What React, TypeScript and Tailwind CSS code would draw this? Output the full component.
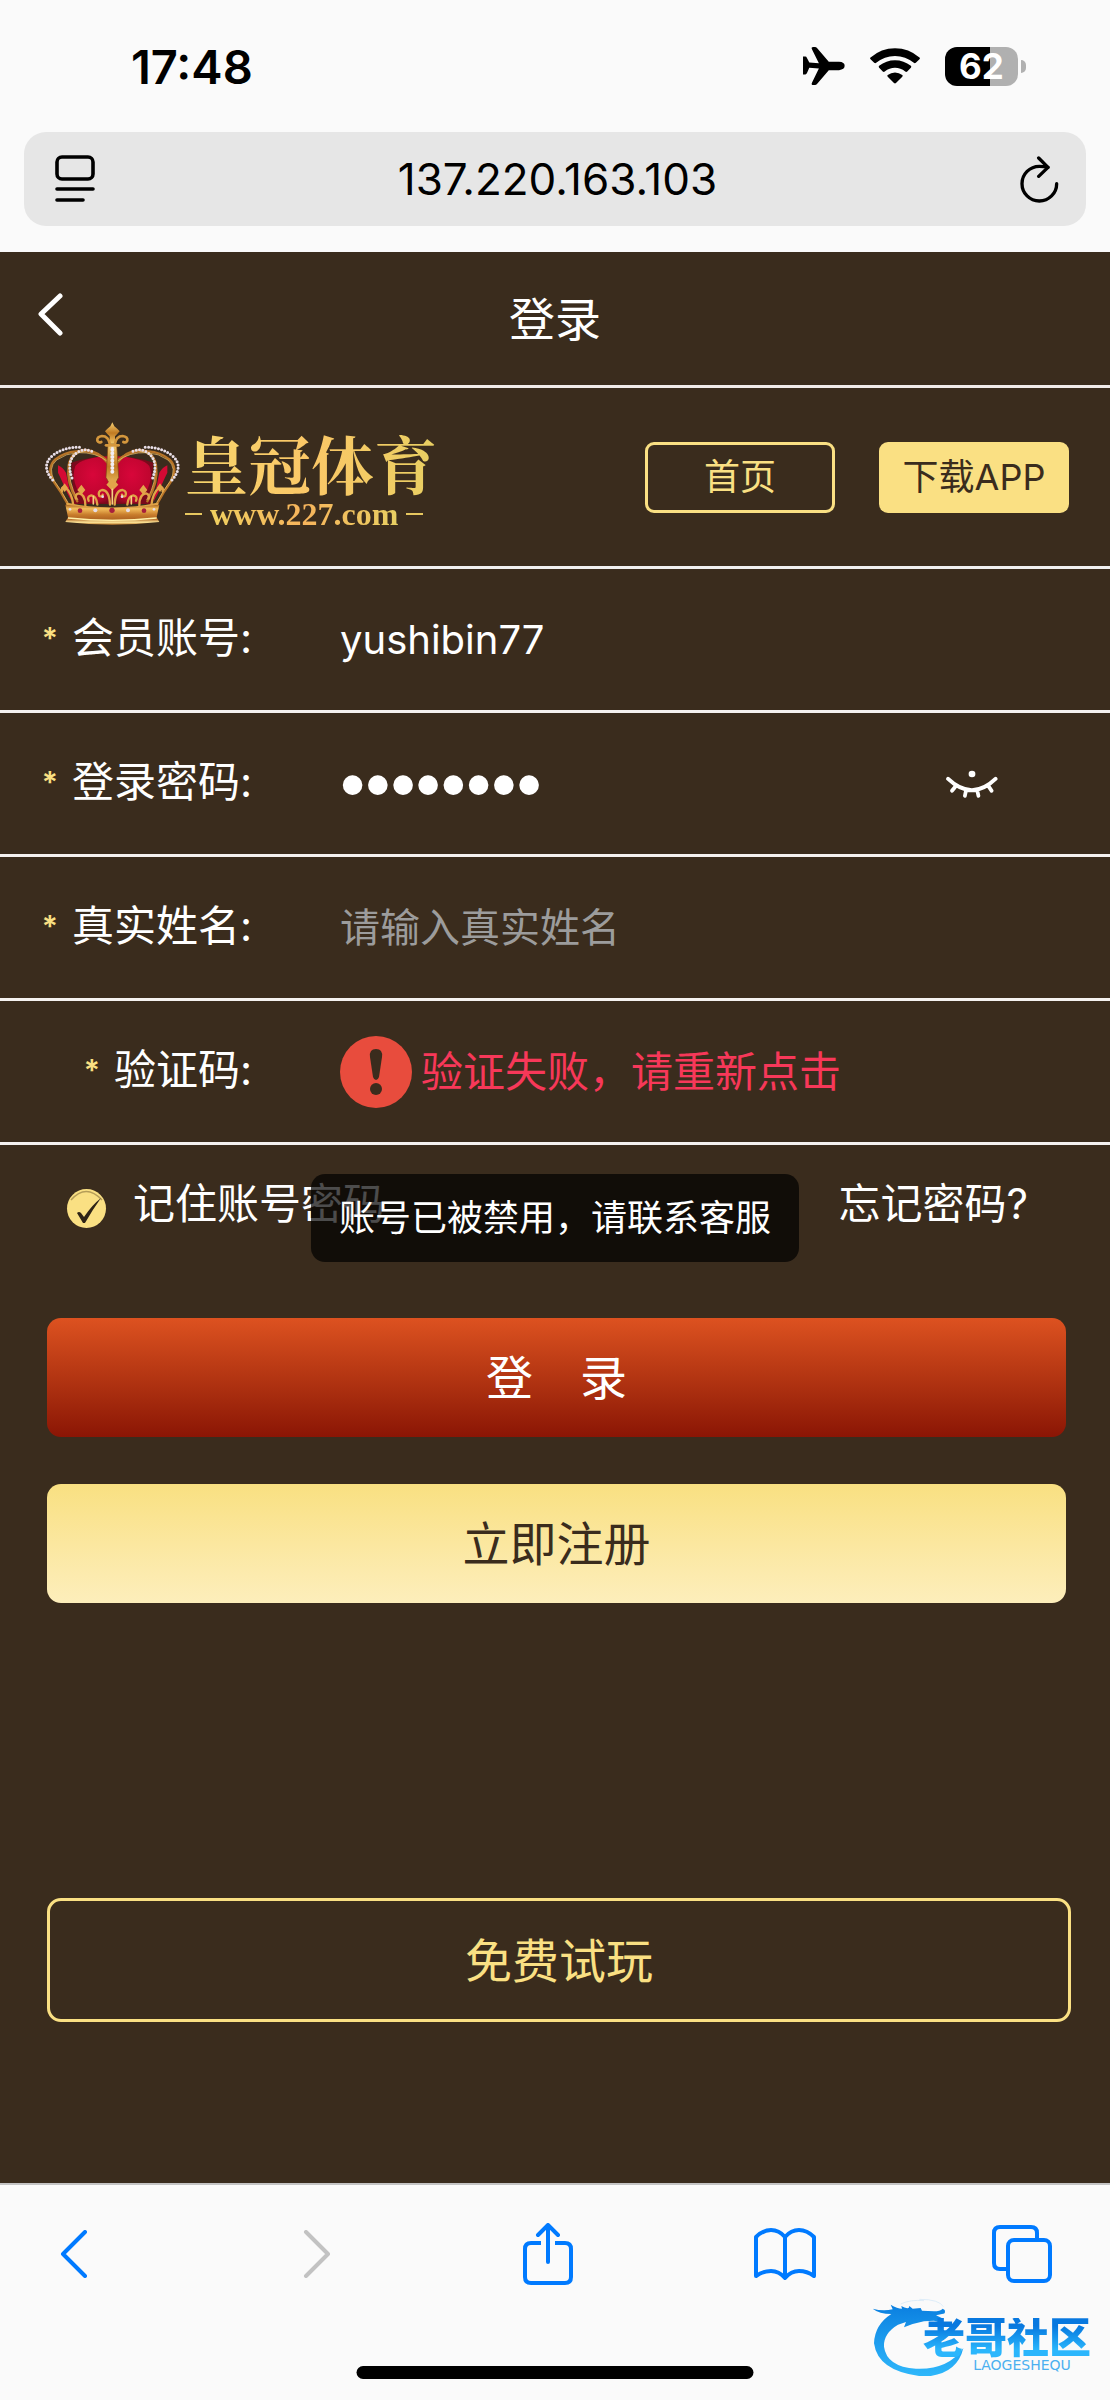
import { useState, type ReactNode } from 'react';

function StatusBar() {
  return (
    <div className="flex h-[132px] items-center justify-between pl-[131px] pr-[84px]">
      <span className="text-[47px] font-semibold leading-none text-black">17:48</span>
      <div className="flex items-center gap-[25px]">
        <svg className="h-[38px] w-[42px]" viewBox="72 53 127 115" aria-hidden="true">
          <path
            d="M72 82h7q3 0 5 4l7 14 29 2-21-42q-3-7 4-7h5q4 0 7 4l35 41h31q17 1 17 12t-17 13h-31l-35 41q-3 4-7 4h-5q-7 0-4-7l21-43-29-2-7 16q-2 4-5 4h-7Z"
            fill="#000"
          />
        </svg>
        <svg className="h-[36px] w-[50px]" viewBox="273 50 150 109" aria-hidden="true">
          <path d="M274 84q-3-3 0-5 32-28 74-28t74 28q3 2 0 5l-11 11q-3 3-6 0-25-21-57-21t-57 21q-3 3-6 0Z" />
          <path d="M300 110q-3-3 0-6 21-17 48-17t48 17q3 3 0 6l-11 11q-3 3-6 0-14-11-31-11t-31 11q-3 3-6 0Z" />
          <path d="M326 137q-3-3 0-5 10-8 22-8t22 8q3 2 0 5l-19 19q-3 3-6 0Z" />
        </svg>
        <div className="flex items-center gap-[3px]">
          <div className="flex h-[39px] w-[73px] items-center justify-center rounded-[12px] bg-linear-to-r from-black from-62% to-[#b0b0b0] to-62% text-[35px] font-bold leading-none text-white">
            62
          </div>
          <div className="h-[13px] w-[5px] rounded-r-full bg-[#b0b0b0]" />
        </div>
      </div>
    </div>
  );
}

function AddressBar() {
  return (
    <div className="mx-6 flex h-[94px] items-center justify-between rounded-[22px] bg-[#e6e6e6] pl-[31px] pr-[26px]">
      <button type="button" aria-label="页面菜单">
        <svg className="h-[48px] w-[40px]" viewBox="0 0 40 48" fill="none" stroke="#000" strokeWidth="3.6" strokeLinecap="round">
          <rect x="2" y="2" width="36" height="22" rx="5" />
          <path d="M2 34h36M2 45h26" />
        </svg>
      </button>
      <span className="text-[44px] leading-none text-black">137.220.163.103</span>
      <button type="button" aria-label="刷新">
        <svg className="h-[47px] w-[40px]" viewBox="722 371 118 141" fill="none" stroke="#000" strokeWidth="10" strokeLinecap="round" strokeLinejoin="round">
          <path d="M831 454a52 52 0 1 1-52-52q14 0 26 3" />
          <path d="M777 377l28 28-28 27" />
        </svg>
      </button>
    </div>
  );
}

function Crown() {
  return (
    <svg className="h-[104px] w-[137px]" viewBox="42 38 411 312" fill="none" aria-hidden="true">
      <defs>
        <linearGradient id="gold" x1="0" y1="0" x2="0" y2="1">
          <stop offset="0" stopColor="#f6cf72" />
          <stop offset="0.5" stopColor="#c07a22" />
          <stop offset="1" stopColor="#f3c768" />
        </linearGradient>
        <linearGradient id="band" x1="0" y1="0" x2="0" y2="1">
          <stop offset="0" stopColor="#a8601c" />
          <stop offset="0.2" stopColor="#f3bd5c" />
          <stop offset="0.5" stopColor="#c87d2c" />
          <stop offset="0.72" stopColor="#b06422" />
          <stop offset="0.88" stopColor="#fde79a" />
          <stop offset="1" stopColor="#c07a2a" />
        </linearGradient>
        <radialGradient id="velvet" cx="0.5" cy="0.4" r="0.7">
          <stop offset="0" stopColor="#d8063a" />
          <stop offset="0.75" stopColor="#bd052e" />
          <stop offset="1" stopColor="#7a0a1c" />
        </radialGradient>
      </defs>
      <path d="M84 168q14 6 24 22l18 88-14-26Q96 214 84 190Z" fill="#d40a34" />
      <path d="M412 168q-14 6-24 22l-18 88 14-26q16-38 28-62Z" fill="#d40a34" />
      <path d="M124 160q60-20 123-20 63 0 123 20l-8 124H132Z" fill="#7a0a1c" />
      <path d="M136 170q20-26 110-30v140h-78q-50-60-32-110Z" fill="url(#velvet)" />
      <path d="M358 170q-20-26-110-30v140h78q50-60 32-110Z" fill="url(#velvet)" />
      <g stroke="#b87427" strokeWidth="7" strokeLinecap="round">
        <path d="M112 282Q92 245 72 218 48 176 76 150q28-22 62-24 60-4 96 30" />
        <path d="M382 282q20-37 40-64 24-42-4-68-28-22-62-24-60-4-96 30" />
        <path d="M142 276q-34-58-26-108 8-42 48-46 40 2 70 40" />
        <path d="M352 276q34-58 26-108-8-42-48-46-40 2-70 40" />
      </g>
      <g stroke="#f2c871" strokeWidth="2">
        <path d="M114 280Q94 243 74 216 52 176 80 152q28-20 62-22 56-2 90 26" />
        <path d="M380 280q20-37 40-64 22-40-6-64-28-20-62-22-56-2-90 26" />
        <path d="M144 272q-32-56-24-106 8-36 44-40" />
        <path d="M350 272q32-56 24-106-8-36-44-40" />
      </g>
      <g stroke="#e9dfe8" strokeWidth="9" strokeLinecap="round" strokeDasharray="0 10">
        <path d="M68 212q-36-42-2-72 34-28 84-26" />
        <path d="M426 212q36-42 2-72-34-28-84-26" />
        <path d="M126 206q-20-54 18-78 20-12 42-2" />
        <path d="M368 206q20-54-18-78-20-12-42-2" />
      </g>
      <path d="M234 104h26l6 100-19 36-19-36Z" fill="url(#gold)" stroke="#7c4512" strokeWidth="2" />
      <path d="M247 110v86" stroke="#f2edf4" strokeWidth="12" strokeLinecap="round" strokeDasharray="0 11" />
      <path d="M247 39l6 12q10 8 16 15-8 9-14 15v22h-16V81q-8-7-14-15 6-7 16-15Z" fill="url(#gold)" />
      <g stroke="#d4973d" strokeWidth="8" strokeLinecap="round">
        <path d="M240 106q-4-26-24-26-16 2-14 14 4 8 12 4" />
        <path d="M254 106q4-26 24-26 16 2 14 14-4 8-12 4" />
        <path d="M228 108h38" />
      </g>
      {/* scroll work above the band */}
      <g stroke="#e0a347" strokeWidth="7" strokeLinecap="round">
        <path d="M240 286q-2-44-24-44-14 4-8 18 8 4 10-4M254 286q2-44 24-44 14 4 8 18-8 4-10-4" />
        <path d="M202 286q-2-26-18-28-14 4-8 16M292 286q2-26 18-28 14 4 8 16" />
        <path d="M166 288q0-34-20-36-12 4-8 16M328 288q0-34 20-36 12 4 8 16" />
        <path d="M130 288q-4-38-24-54-14-2-10 12M364 288q4-38 24-54 14-2 10 12" />
        <path d="M112 284q60 14 135 14t135-14" />
      </g>
      <path d="M247 206l18 20-18 18-18-18ZM154 226l12 16-12 14-12-14ZM340 226l12 16-12 14-12-14ZM104 222l10 14-10 12-10-12ZM390 222l10 14-10 12-10-12Z" fill="#e2a54a" />
      <path d="M247 240v44M190 262v22M304 262v22" stroke="#f5d283" strokeWidth="5" strokeLinecap="round" />
      <path d="M106 286q141 20 282 0l-8 38 8 14q-141 16-282 0l8-14Z" fill="url(#band)" />
      <path d="M114 326q133 14 266 0" stroke="#fff0a8" strokeWidth="4" />
      <g fill="#a8203c">
        <circle cx="150" cy="304" r="7" />
        <circle cx="246" cy="303" r="8" />
        <circle cx="342" cy="304" r="7" />
      </g>
      <g fill="#e6dce6">
        <circle cx="196" cy="303" r="6" />
        <circle cx="294" cy="303" r="6" />
        <circle cx="120" cy="300" r="4" />
        <circle cx="372" cy="300" r="4" />
        <circle cx="218" cy="262" r="4" />
        <circle cx="276" cy="262" r="4" />
      </g>
    </svg>
  );
}

function Logo() {
  return (
    <a href="#" className="flex items-center gap-1 pb-1.5" aria-label="皇冠体育 www.227.com">
      <Crown />
      <span className="flex flex-col">
        <span className="bg-linear-to-r from-[#f6d56c] via-[#fbc767] to-[#e8cf62] bg-clip-text font-['Noto_Serif_CJK_SC','Noto_Sans_CJK_SC',serif] text-[63px] font-bold leading-[80px] text-transparent">
          皇冠体育
        </span>
        <span className="flex items-center gap-2 font-['Liberation_Serif',serif] text-[32px] font-bold leading-[24px]">
          <span className="h-[2px] w-[17px] bg-[#e6c75f]" />
          <span className="bg-linear-to-r from-[#f0d060] via-[#f6b45c] to-[#e8cf62] bg-clip-text text-transparent">www.227.com</span>
          <span className="h-[2px] w-[17px] bg-[#e6c75f]" />
        </span>
      </span>
    </a>
  );
}

function Row({ label, htmlFor, children }: { label: string; htmlFor: string; children: ReactNode }) {
  return (
    <div className="flex h-[144px] items-center border-b-[3px] border-[#f5f2f0]">
      <label htmlFor={htmlFor} className="flex w-[252px] shrink-0 items-center justify-end gap-[14px] pb-1 text-[42px] leading-[60px] text-white">
        <span className="text-[30px] font-semibold text-[#fae083]">*</span>
        {label}:
      </label>
      <div className="ml-[88px] flex min-w-0 flex-1 items-center">{children}</div>
    </div>
  );
}

function Watermark() {
  return (
    <div className="absolute right-4 bottom-6 h-[78px] w-[222px]">
      <svg className="h-full w-full" viewBox="94 54 666 234" aria-hidden="true">
        <defs>
          <linearGradient id="wave" x1="0" y1="0" x2="0" y2="1">
            <stop offset="0" stopColor="#0a7fe0" />
            <stop offset="1" stopColor="#2fb8fb" />
          </linearGradient>
        </defs>
        <path
          d="M96 86q30 8 60 2l-6-14q20 12 34 12l-2-8q12 8 22 6l2-6 10 8 24-2 4 8 36 2q18 0 26-8l6 4q4 12-8 12l-18 4 22 10-6 12-22-6-30 2-34 8-26 10 6-16-24 8q-44 26-42 66 8 60 96 66 96 4 142-62-18 78-114 86Q112 278 100 190q2-56 52-88-36 0-56-16Z"
          fill="url(#wave)"
        />
        <path d="M180 72q30-14 70-10M236 58q60 0 72 22" fill="none" stroke="#cfe6f7" strokeWidth="2" />
      </svg>
      <span className="absolute top-[20px] right-[3px] flex flex-col items-center text-right">
        <span className="flex gap-[3px] bg-linear-to-b from-[#0878df] from-20% to-[#2bb6fc] to-80% bg-clip-text text-[42px] font-black leading-[40px] text-transparent">
          老哥社区
        </span>
        <span className="pl-[30px] font-['DejaVu_Sans',sans-serif] text-[14px] leading-[14px] text-[#4bb0f0]">LAOGESHEQU</span>
      </span>
    </div>
  );
}

function BrowserToolbar() {
  return (
    <footer className="relative h-[217px] border-t-2 border-[#c4c4c4] bg-[#fafafa]">
      <nav className="flex items-center justify-between pl-[42px] pr-[56px] pt-[37px] text-[#007aff]">
        <button type="button" aria-label="后退" className="flex h-[64px] w-[64px] items-center justify-center">
          <svg className="h-[48px] w-[28px]" viewBox="0 0 28 48" fill="none" stroke="currentColor" strokeWidth="4" strokeLinecap="round" strokeLinejoin="round">
            <path d="M25 2 3 24l22 22" />
          </svg>
        </button>
        <button type="button" aria-label="前进" className="flex h-[64px] w-[64px] items-center justify-end pr-3 text-[#c2c2c2]">
          <svg className="h-[48px] w-[28px]" viewBox="0 0 28 48" fill="none" stroke="currentColor" strokeWidth="4" strokeLinecap="round" strokeLinejoin="round">
            <path d="m3 2 22 22L3 46" />
          </svg>
        </button>
        <button type="button" aria-label="分享" className="flex h-[64px] w-[64px] items-center justify-center">
          <svg className="h-[62px] w-[50px]" viewBox="0 0 50 62" fill="none" stroke="currentColor" strokeWidth="4" strokeLinecap="round" strokeLinejoin="round">
            <path d="M18 20H8q-6 0-6 6v28q0 6 6 6h34q6 0 6-6V26q0-6-6-6H32" strokeLinecap="butt" />
            <path d="M25 39V3M15 12 25 2l10 10" />
          </svg>
        </button>
        <button type="button" aria-label="书签" className="flex h-[64px] w-[64px] items-center justify-center">
          <svg className="h-[52px] w-[62px]" viewBox="0 0 62 52" fill="none" stroke="currentColor" strokeWidth="4" strokeLinecap="round" strokeLinejoin="round">
            <path d="M31 9Q25 2 17 2T2 9v39q7-5 15-5t14 7q6-7 14-7t15 5V9q-7-7-15-7T31 9v40" />
          </svg>
        </button>
        <button type="button" aria-label="标签页" className="flex h-[64px] w-[64px] items-center justify-center">
          <svg className="h-[58px] w-[60px]" viewBox="0 0 60 58" fill="none" stroke="currentColor" strokeWidth="4" strokeLinejoin="round">
            <path d="M15 44H8q-6 0-6-6V8q0-6 6-6h31q6 0 6 6v6" />
            <rect x="16" y="15" width="42" height="41" rx="6" />
          </svg>
        </button>
      </nav>
      <div className="absolute bottom-[21px] left-1/2 h-[13px] w-[397px] -translate-x-1/2 rounded-full bg-black" />
      <Watermark />
    </footer>
  );
}

export default function App() {
  const [account, setAccount] = useState('yushibin77');
  const [password, setPassword] = useState('12345678');
  const [realName, setRealName] = useState('');
  const [remember, setRemember] = useState(true);

  return (
    <div className="flex min-h-screen flex-col bg-[#fafafa] font-['Inter','Noto_Sans_CJK_SC',sans-serif]">
      <div className="h-[252px]">
        <StatusBar />
        <AddressBar />
      </div>

      <main className="flex-1 bg-[#3a2c1d]">
        <header className="relative flex h-[136px] items-center justify-center border-b-[3px] border-[#f0ebe9]">
          <button type="button" aria-label="返回" className="absolute left-[38px] top-[41px]">
            <svg className="h-[43px] w-[25px]" viewBox="0 0 25 43" fill="none" stroke="#fff" strokeWidth="5" strokeLinecap="round" strokeLinejoin="round">
              <path d="M22 3 3 21l19 19" />
            </svg>
          </button>
          <h1 className="text-[46px] leading-[60px] text-white">登录</h1>
        </header>

        <div className="flex h-[181px] items-center justify-between border-b-[3px] border-[#f0f0f0] pl-[44px] pr-[41px]">
          <Logo />
          <div className="flex gap-[44px] text-[36px] leading-none">
            <a href="#" className="flex h-[71px] w-[190px] items-center justify-center rounded-[9px] border-[3px] border-[#fae083] text-[#fae083]">
              首页
            </a>
            <a href="#" className="flex h-[71px] w-[190px] items-center justify-center rounded-[9px] bg-[#fae083] text-[#3a2c1d]">
              下载APP
            </a>
          </div>
        </div>

        <form onSubmit={(e) => e.preventDefault()}>
          <Row label="会员账号" htmlFor="account">
            <input
              id="account"
              type="text"
              value={account}
              onChange={(e) => setAccount(e.target.value)}
              className="h-[80px] w-full bg-transparent text-[40px] text-white outline-none"
            />
          </Row>
          <Row label="登录密码" htmlFor="password">
            <input
              id="password"
              type="password"
              value={password}
              onChange={(e) => setPassword(e.target.value)}
              className="h-[80px] min-w-0 flex-1 bg-transparent font-['Liberation_Sans',sans-serif] text-[72px] text-white outline-none"
            />
            <button type="button" aria-label="显示密码" className="mr-[112px]">
              <svg className="h-[28px] w-[52px]" viewBox="1040 185 154 76" fill="none" stroke="#fff" strokeWidth="11" strokeLinecap="round" preserveAspectRatio="none">
                <ellipse cx="1117" cy="196" rx="10" ry="9" fill="#fff" stroke="none" />
                <path d="M1046 209q71 62 141 0M1066 232l-8 9M1168 232l7 9M1099 242l-3 13M1133 242l3 13" />
              </svg>
            </button>
          </Row>
          <Row label="真实姓名" htmlFor="realname">
            <input
              id="realname"
              type="text"
              placeholder="请输入真实姓名"
              value={realName}
              onChange={(e) => setRealName(e.target.value)}
              className="h-[80px] w-full bg-transparent text-[40px] text-white outline-none placeholder:text-[#9c9c9c]"
            />
          </Row>
          <Row label="验证码" htmlFor="captcha">
            <button id="captcha" type="button" className="flex items-center gap-[9px] text-[42px] leading-[60px] text-[#f73859]">
              <svg className="h-[72px] w-[72px]" viewBox="0 0 72 72" aria-hidden="true">
                <circle cx="36" cy="36" r="36" fill="#e84c3d" />
                <path d="M36 13q7 0 6 8l-3 20q-1 3-3 3t-3-3l-3-20q-1-8 6-8Z" fill="#3a2c1d" />
                <circle cx="36" cy="53" r="6" fill="#3a2c1d" />
              </svg>
              验证失败，请重新点击
            </button>
          </Row>

          <div className="relative flex h-[173px] items-start justify-between pl-[67px] pr-[82px] pt-[29px] text-[42px] leading-[60px] text-white">
            <label className="flex items-center gap-[27px]">
              <span className="relative mt-2 flex">
                <input
                  type="checkbox"
                  checked={remember}
                  onChange={(e) => setRemember(e.target.checked)}
                  className="h-[39px] w-[39px] appearance-none rounded-full bg-[#fae083]"
                />
                {remember && (
                  <svg className="pointer-events-none absolute inset-0 h-[39px] w-[39px]" viewBox="0 0 39 39" aria-hidden="true">
                    <path d="M4 11q15-17 31 0" fill="none" stroke="#b59d58" strokeWidth="1.5" />
                    <path d="M10 24q2-2 4 0l3 4Q25 16 34 9 26 20 18 34h-2Z" fill="#2e2416" />
                  </svg>
                )}
              </span>
              记住账号密码
            </label>
            <a href="#">忘记密码?</a>
            <div
              role="alert"
              className="absolute left-1/2 top-[29px] flex h-[88px] w-max -translate-x-1/2 items-center rounded-[14px] bg-black/70 px-[28px] text-[36px]"
            >
              账号已被禁用，请联系客服
            </div>
          </div>

          <div className="flex flex-col pl-[47px] pr-[44px] text-[47px] leading-none">
            <button type="submit" className="h-[119px] rounded-[14px] bg-linear-to-b from-[#dd5220] to-[#8b1505] text-white">
              登　录
            </button>
            <button type="button" className="mt-[47px] h-[119px] rounded-[14px] bg-linear-to-b from-[#f9e081] to-[#fdeebb] text-[#3a2c1d]">
              立即注册
            </button>
          </div>
          <div className="mt-[295px] pl-[47px] pr-[39px]">
            <button type="button" className="h-[124px] w-full rounded-[14px] border-[3px] border-[#fae083] text-[47px] leading-none text-[#fae083]">
              免费试玩
            </button>
          </div>
        </form>
      </main>

      <BrowserToolbar />
    </div>
  );
}
